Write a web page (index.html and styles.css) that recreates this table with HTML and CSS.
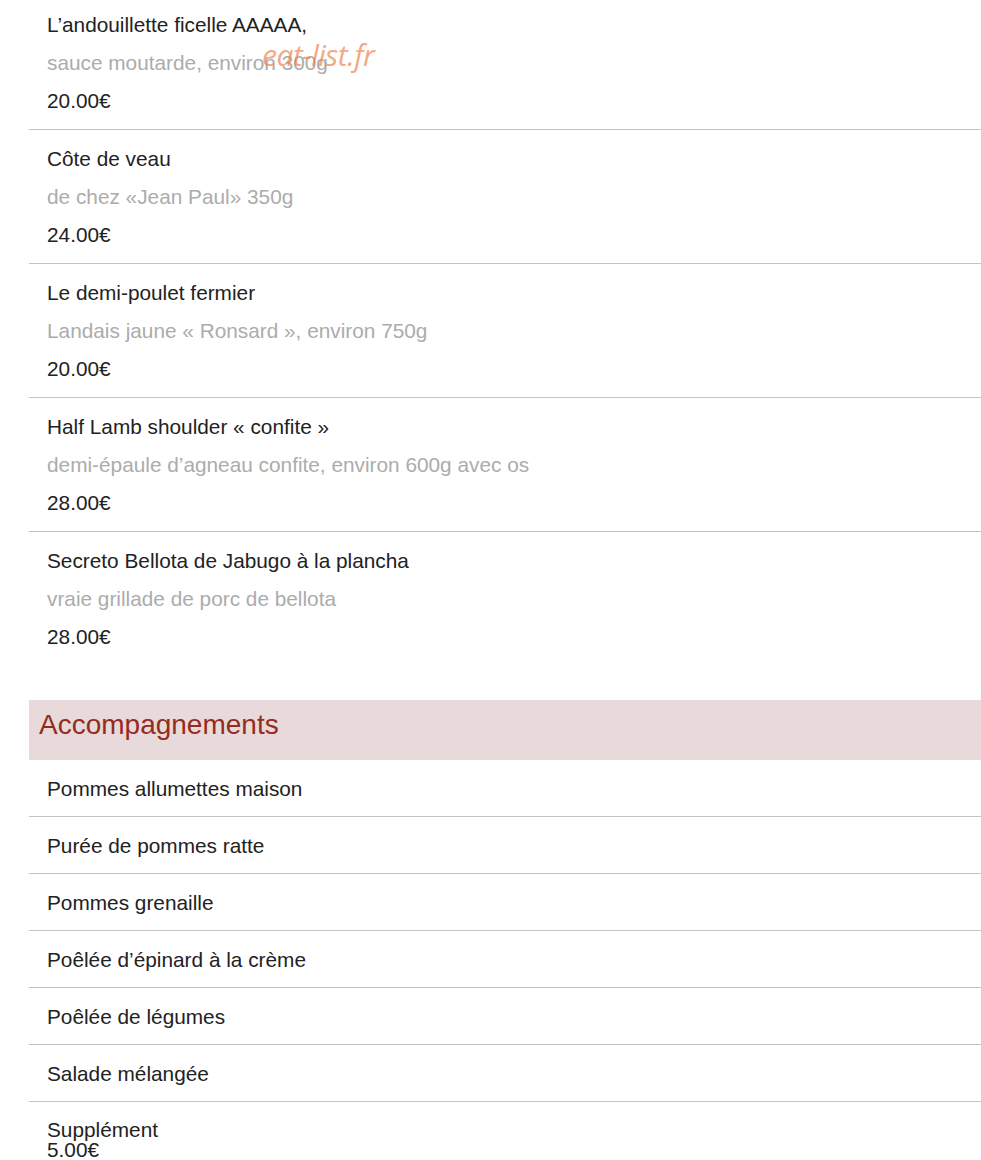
FILE: index.html
```html
<!DOCTYPE html>
<html lang="fr">
<head>
<meta charset="utf-8">
<title>Menu</title>
<link rel="stylesheet" href="styles.css">
</head>
<body>
<div class="page">
  <ul class="dishes">
    <li class="dish">
      <div class="name">L’andouillette ficelle AAAAA,</div>
      <div class="desc">sauce moutarde, environ 300g</div>
      <div class="price">20.00€</div>
    </li>
    <li class="dish">
      <div class="name">Côte de veau</div>
      <div class="desc">de chez «Jean Paul» 350g</div>
      <div class="price">24.00€</div>
    </li>
    <li class="dish">
      <div class="name">Le demi-poulet fermier</div>
      <div class="desc">Landais jaune « Ronsard », environ 750g</div>
      <div class="price">20.00€</div>
    </li>
    <li class="dish">
      <div class="name">Half Lamb shoulder « confite »</div>
      <div class="desc">demi-épaule d’agneau confite, environ 600g avec os</div>
      <div class="price">28.00€</div>
    </li>
    <li class="dish last">
      <div class="name">Secreto Bellota de Jabugo à la plancha</div>
      <div class="desc">vraie grillade de porc de bellota</div>
      <div class="price">28.00€</div>
    </li>
  </ul>

  <h2 class="section-title">Accompagnements</h2>
  <ul class="sides">
    <li class="side">Pommes allumettes maison</li>
    <li class="side">Purée de pommes ratte</li>
    <li class="side">Pommes grenaille</li>
    <li class="side">Poêlée d’épinard à la crème</li>
    <li class="side">Poêlée de légumes</li>
    <li class="side">Salade mélangée</li>
    <li class="side last">
      <div>Supplément</div>
      <div>5.00€</div>
    </li>
  </ul>
</div>
<div class="watermark">eat-list.fr</div>
</body>
</html>
```

FILE: styles.css
```css
html, body {
  margin: 0;
  padding: 0;
  background: #ffffff;
}

body {
  font-family: "Liberation Sans", Arial, sans-serif;
  font-size: 20.8px;
  color: #222222;
  position: relative;
}

.page {
  margin: -4px 0 0 29px;
}

ul {
  list-style: none;
  margin: 0;
  padding: 0;
}

.dish {
  padding: 10px 18px 9px;
  border-bottom: 1px solid #c8c3c3;
  line-height: 38px;
  height: 114px;
}

.dish.last {
  border-bottom: none;
}

.name, .price {
  color: #222222;
}

.desc {
  color: #acacac;
}

.section-title {
  margin: 35px 0 0 0;
  height: 60px;
  line-height: 50px;
  padding: 0 10px;
  background: #e8dada;
  color: #962b1f;
  font-weight: normal;
  font-size: 28px;
  box-sizing: border-box;
}

.side {
  padding: 18px 18px 17px;
  line-height: 21px;
  border-bottom: 1px solid #c8c3c3;
}

.side.last {
  border-bottom: none;
  padding-bottom: 0;
  line-height: 20px;
}

.watermark {
  position: absolute;
  left: 262px;
  top: 34px;
  font-family: "Open Sans", "DejaVu Sans", sans-serif;
  font-style: italic;
  font-size: 30px;
  color: rgba(238, 130, 75, 0.7);
  letter-spacing: -0.5px;
  pointer-events: none;
}
```
